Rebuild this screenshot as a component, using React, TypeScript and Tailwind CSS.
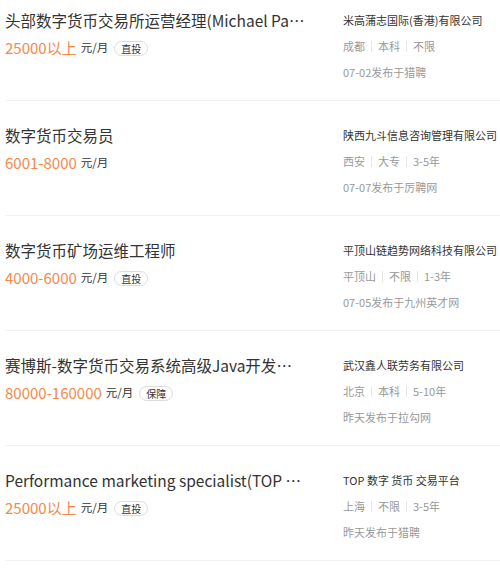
import React from "react";

type Job = {
  title: string;
  salary: string;
  tag?: string;
  company: string;
  city: string;
  edu: string;
  exp: string;
  date: string;
};

const jobs: Job[] = [
  {
    title: "头部数字货币交易所运营经理(Michael Page)",
    salary: "25000以上",
    tag: "直投",
    company: "米高蒲志国际(香港)有限公司",
    city: "成都",
    edu: "本科",
    exp: "不限",
    date: "07-02发布于猎聘",
  },
  {
    title: "数字货币交易员",
    salary: "6001-8000",
    company: "陕西九斗信息咨询管理有限公司",
    city: "西安",
    edu: "大专",
    exp: "3-5年",
    date: "07-07发布于厉聘网",
  },
  {
    title: "数字货币矿场运维工程师",
    salary: "4000-6000",
    tag: "直投",
    company: "平顶山链趋势网络科技有限公司",
    city: "平顶山",
    edu: "不限",
    exp: "1-3年",
    date: "07-05发布于九州英才网",
  },
  {
    title: "赛博斯-数字货币交易系统高级Java开发工程师",
    salary: "80000-160000",
    tag: "保障",
    company: "武汉鑫人联劳务有限公司",
    city: "北京",
    edu: "本科",
    exp: "5-10年",
    date: "昨天发布于拉勾网",
  },
  {
    title: "Performance marketing specialist(TOP Exchange)",
    salary: "25000以上",
    tag: "直投",
    company: "TOP 数字 货币 交易平台",
    city: "上海",
    edu: "不限",
    exp: "3-5年",
    date: "昨天发布于猎聘",
  },
];

const font = { fontFamily: '"Noto Sans CJK SC", "Noto Sans", sans-serif' };

function Sep() {
  return <span className="mx-[6px] inline-block h-[11px] w-px bg-[#e6e6e6] align-[-1px]" />;
}

export default function App() {
  return (
    <div className="w-[500px] h-[576px] overflow-hidden bg-white pl-[5px]" style={font}>
      {jobs.map((job, i) => (
        <div
          key={job.title}
          className={`flex border-b border-[#f2f2f2] pb-[18px] ${i === 0 ? "pt-[8px]" : "pt-[22px]"}`}
        >
          <div className="w-[300px] shrink-0">
            <div className="truncate text-[15.5px] leading-[24px] text-[#333]">{job.title}</div>
            <div className="mt-[6px] flex h-[20px] items-center">
              <span className="text-[15px] text-[#f6894a]">{job.salary}</span>
              <span className="ml-[4px] text-[11.5px] text-[#333]">元/月</span>
              {job.tag && (
                <span className="ml-[6px] rounded-full border border-[#dcdcdc] px-[6px] text-[10px] leading-[13px] text-[#333]">
                  {job.tag}
                </span>
              )}
            </div>
          </div>
          <div className="ml-[38px] mt-[2px] flex flex-col gap-[6px] whitespace-nowrap text-[11px] leading-[20px]">
            <div className="text-[#333]">{job.company}</div>
            <div className="text-[#999]">
              {job.city}
              <Sep />
              {job.edu}
              <Sep />
              {job.exp}
            </div>
            <div className="text-[#999]">{job.date}</div>
          </div>
        </div>
      ))}
    </div>
  );
}
